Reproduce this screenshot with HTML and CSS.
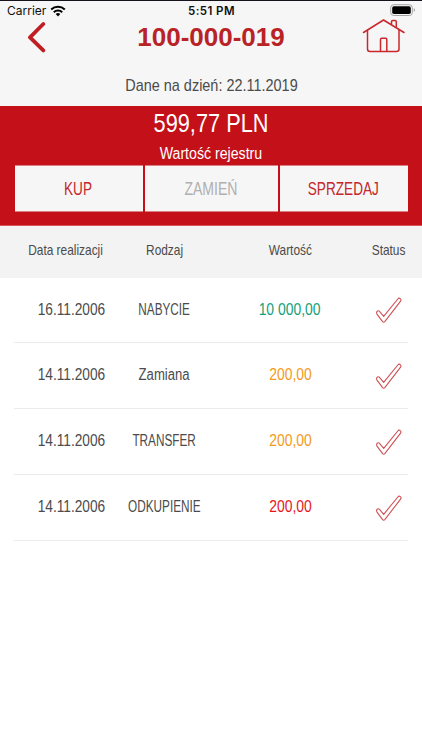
FILE: index.html
```html
<!DOCTYPE html>
<html lang="pl">
<head>
<meta charset="utf-8">
<title>100-000-019</title>
<link rel="stylesheet" href="styles.css">
</head>
<body>
<svg class="defs" width="0" height="0" aria-hidden="true">
  <symbol id="check" viewBox="0 0 30 30">
    <path d="M2.6 16.6a1.7 1.7 0 0 1 2.7-1.5l4.4 5.2L23.8 3a1.75 1.75 0 0 1 2.8 2.1L10.8 25.6q-1.1 1.2-2.2 0L3 18.1q-.4-.7-.4-1.5z" fill="#fff" stroke="#cd5054" stroke-width="1.1"/>
  </symbol>
</svg>
<header class="top">
  <div class="statusbar">
    <div class="carrier"><span>Carrier</span>
      <svg width="16" height="12" viewBox="0 0 16 12"><g fill="none" stroke="#000" stroke-width="2"><path d="M1.2 4.5a9.8 9.8 0 0 1 13.6 0"/><path d="M3.8 7.2a6 6 0 0 1 8.4 0"/></g><path d="M8 11.4L5.7 9.1a3.3 3.3 0 0 1 4.6 0z"/></svg>
    </div>
    <div class="clock">5:51 PM</div>
    <svg class="battery" width="26" height="13" viewBox="0 0 26 13"><rect x=".7" y=".7" width="21.6" height="10.8" rx="3" fill="#f6f6f6" stroke="#a3a3a3"/><rect x="2.2" y="2.2" width="18.6" height="7.8" rx="1.7"/><path d="M23.8 4.2q1.2.5 1.2 1.8t-1.2 1.8z" fill="#999"/></svg>
  </div>
  <div class="titlebar">
    <svg class="back" width="20" height="32" viewBox="0 0 20 32"><path d="M16.3 3L3 16.4 16.3 29.4" fill="none" stroke="#bf1e23" stroke-width="3.8" stroke-linecap="round" stroke-linejoin="round"/></svg>
    <h1>100-000-019</h1>
    <svg class="home" width="44" height="36" viewBox="0 0 44 36"><g fill="none" stroke="#c9282c" stroke-width="1.5" stroke-linecap="round" stroke-linejoin="round"><path d="M1.5 14.5L21.5 2 42 14.5"/><path d="M5.5 12.2V31q0 2.5 2.5 2.5h26.5q2.5 0 2.5-2.5V11.6"/><path d="M18.5 33.3V21.4q0-1.2 1.2-1.2h3.9q1.2 0 1.2 1.2v11.9M29.5 6.2V3.7q0-1.2 1.2-1.2h2.4q1.2 0 1.2 1.2V9.3"/></g></svg>
  </div>
  <p class="asof"><span class="t">Dane na dzień: 22.11.2019</span></p>
</header>
<section class="summary">
  <div class="amount"><span class="t">599,77 PLN</span></div>
  <div class="label"><span class="t">Wartość rejestru</span></div>
  <div class="actions">
    <button><span class="t">KUP</span></button>
    <button disabled><span class="t">ZAMIEŃ</span></button>
    <button><span class="t">SPRZEDAJ</span></button>
  </div>
</section>
<main>
  <div class="head">
    <span class="t">Data realizacji</span><span class="t">Rodzaj</span><span class="t">Wartość</span><span class="t">Status</span>
  </div>
  <div class="row"><span class="t date">16.11.2006</span><span class="t caps">NABYCIE</span><span class="t sum buy">10 000,00</span><svg class="check"><use href="#check"/></svg></div>
  <div class="row"><span class="t date">14.11.2006</span><span class="t">Zamiana</span><span class="t sum swap">200,00</span><svg class="check"><use href="#check"/></svg></div>
  <div class="row"><span class="t date">14.11.2006</span><span class="t caps">TRANSFER</span><span class="t sum swap">200,00</span><svg class="check"><use href="#check"/></svg></div>
  <div class="row"><span class="t date">14.11.2006</span><span class="t caps">ODKUPIENIE</span><span class="t sum sell">200,00</span><svg class="check"><use href="#check"/></svg></div>
</main>
</body>
</html>
```
FILE: styles.css
```css
* { box-sizing: border-box; }
body {
  margin: 0;
  height: 750px;
  overflow: hidden;
  background: #fff;
  color: #4b4b4b;
  font-family: "Liberation Sans", Arial, sans-serif;
}
.defs { display: block; }

/* Condensed text: each class sets its own horizontal ratio */
.t {
  display: inline-block;
  white-space: nowrap;
  transform: scaleX(var(--w, .82));
}

.top {
  height: 106px;
  background: #f6f6f6;
  border-top: 1px solid #17131a;
}
.statusbar {
  display: grid;
  grid-template-columns: 1fr auto 1fr;
  align-items: center;
  height: 20px;
  padding: 0 6px 0 7px;
  color: #111;
  font-family: Inter, sans-serif;
  font-size: 11.5px;
}
.carrier { display: flex; align-items: center; gap: 4px; font-size: 12px; margin-top: -1px; }
.clock { font-weight: 600; letter-spacing: .45px; }
.battery { justify-self: end; margin-top: -1px; }
.titlebar {
  display: grid;
  grid-template-columns: 60px 1fr 60px;
  align-items: center;
  height: 34px;
}
.back { justify-self: end; margin-right: 13px; margin-top: -2px; }
h1 {
  margin: -2px 0 0;
  color: #b92327;
  font-size: 26px;
  line-height: 34px;
  text-align: center;
}
.home { margin-top: -4px; }
.asof {
  margin: 16px 0 0;
  font-size: 17px;
  line-height: 29px;
  text-align: center;
}
.asof .t { --w: .85; }

.summary {
  height: 120px;
  padding: 3px 14px 0;
  background: #c41119;
  border-bottom: 1px solid #d9545b;
  color: #fff;
  text-align: center;
}
.amount { --w: .87; font-size: 25px; line-height: 28px; }
.label { --w: .885; margin-top: 7px; font-size: 16px; line-height: 20px; }
.actions {
  display: grid;
  grid-template-columns: 128px 133px 128px;
  gap: 2px;
  height: 47px;
  margin-top: 1px;
  padding-left: 0.5px;
}
button {
  --w: .735;
  display: flex;
  align-items: center;
  justify-content: center;
  padding: 0;
  border: 1px solid #d98083;
  border-width: 1px 0;
  background: #f6f6f6;
  color: #c3272b;
  font: 18.5px "Liberation Sans", Arial, sans-serif;
}
button:disabled { --w: .76; color: #b0b0b0; }

.head, .row {
  display: grid;
  grid-template-columns: 103px 95px 156px 41px;
  align-items: center;
  justify-items: center;
}
.head {
  height: 52px;
  padding-left: 14px;
  padding-bottom: 4px;
  background: #f3f3f3;
  font-size: 14.5px;
}
.row {
  height: 66px;
  margin: 0 14px;
  padding-bottom: 1px;
  border-bottom: 1px solid #ececec;
  font-size: 16px;
}
.row:nth-child(2) { height: 65px; }
.row .date { --w: .855; margin-left: 11px; }
.caps { --w: .735; }
.sum { --w: .87; }
.buy { color: #14a078; }
.swap { color: #f39a20; }
.sell { color: #e6151b; }
.check { width: 30px; height: 30px; margin-top: 3px; }
```
